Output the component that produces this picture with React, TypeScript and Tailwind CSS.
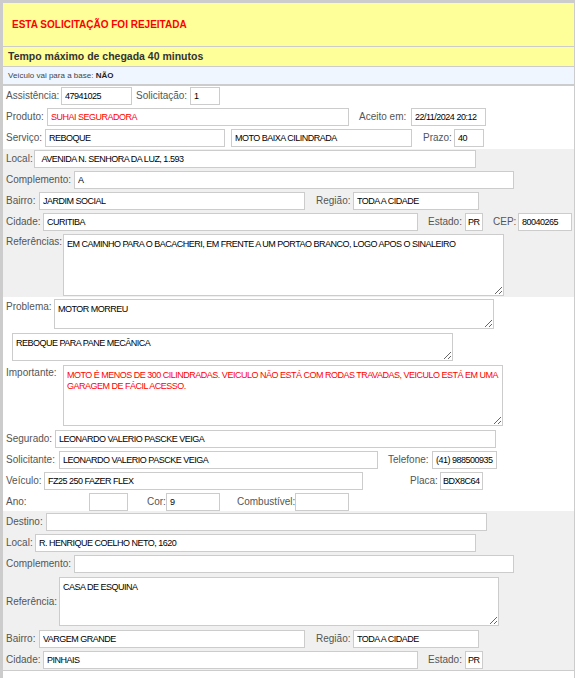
import { clsx } from "clsx";
import { twMerge } from "tailwind-merge";
import type { ReactNode } from "react";

const cn = (...args: Parameters<typeof clsx>) => twMerge(clsx(args));

const valueFont = "font-['Liberation_Sans',Arial,sans-serif] text-[9px] tracking-[-0.5px]";

const L = ({ className, children }: { className?: string; children: ReactNode }) => (
  <span className={cn("shrink-0 whitespace-nowrap text-[10px] leading-[18px] text-[#555]", className)}>{children}</span>
);

const I = ({ className, value = "", red }: { className?: string; value?: string; red?: boolean }) => (
  <input
    readOnly
    value={value}
    className={cn(
      valueFont,
      "h-[18px] shrink-0 border border-[#ccc] bg-white px-[3px] outline-none",
      red ? "text-[#ff0000]" : "text-black",
      className
    )}
  />
);

const T = ({ className, value = "", red }: { className?: string; value?: string; red?: boolean }) => (
  <textarea
    readOnly
    value={value}
    className={cn(
      valueFont,
      "shrink-0 resize border border-[#ccc] bg-white px-[3px] py-[4px] leading-[11px] outline-none",
      red ? "text-[#ff0000]" : "text-black",
      className
    )}
  />
);

const Row = ({ className, children }: { className?: string; children: ReactNode }) => (
  <div className={cn("flex h-[18px] items-center pl-[3px]", className)}>{children}</div>
);

export default function App() {
  return (
    <div className="min-h-[678px] w-[581px] bg-white font-['Liberation_Sans',Arial,sans-serif]">
      <div className="min-h-[678px] w-[575px] border-t-[3px] border-r border-l-[3px] border-[#ccc]">
        {/* status banner */}
        <div className="flex h-[44px] items-center border-b border-[#ccc] bg-[#ffff99] pl-[9px] text-[10px] font-bold text-[#ff0000]">
          ESTA SOLICITAÇÃO FOI REJEITADA
        </div>
        <div className="flex h-[20px] items-center border-b border-[#ccc] bg-[#ffff99] pl-[5px] text-[10.5px] font-bold text-[#333]">
          Tempo máximo de chegada 40 minutos
        </div>
        <div className="flex h-[19px] items-center border-b-2 border-[#ccc] bg-[#eff6ff] pl-[5px] text-[8px] text-[#444]">
          Veículo vai para a base:&nbsp;<b className="text-[#222]">NÃO</b>
        </div>

        {/* atendimento */}
        <div className="flex flex-col gap-[3px] bg-white pt-[1px] pb-[2px]">
          <Row>
            <L className="w-[55px]">Assistência:</L>
            <I className="w-[71px]" value="47941025" />
            <L className="ml-[4px] w-[54px]">Solicitação:</L>
            <I className="w-[30px]" value="1" />
          </Row>
          <Row>
            <L className="w-[41px]">Produto:</L>
            <I className="w-[302px]" value="SUHAI SEGURADORA" red />
            <L className="ml-[10px] w-[52px]">Aceito em:</L>
            <I className="w-[75px]" value="22/11/2024 20:12" />
          </Row>
          <Row>
            <L className="w-[39px]">Serviço:</L>
            <I className="w-[180px]" value="REBOQUE" />
            <I className="ml-[6px] w-[181px]" value="MOTO BAIXA CILINDRADA" />
            <L className="ml-[11px] w-[31px]">Prazo:</L>
            <I className="w-[30px]" value="40" />
          </Row>
        </div>

        {/* origem */}
        <div className="flex flex-col gap-[3px] bg-[#f0f0f0] pt-[1px] pb-[1px]">
          <Row>
            <L className="w-[28px]">Local:</L>
            <I className="w-[442px]" value="  AVENIDA N. SENHORA DA LUZ, 1.593" />
          </Row>
          <Row>
            <L className="w-[68px]">Complemento:</L>
            <I className="w-[440px]" value="A" />
          </Row>
          <Row>
            <L className="w-[33px]">Bairro:</L>
            <I className="w-[266px]" value="JARDIM SOCIAL" />
            <L className="ml-[11px] w-[37px]">Região:</L>
            <I className="w-[126px]" value="TODA A CIDADE" />
          </Row>
          <Row>
            <L className="w-[37px]">Cidade:</L>
            <I className="w-[375px]" value="CURITIBA" />
            <L className="ml-[10px] w-[37px]">Estado:</L>
            <I className="w-[18px] pr-0 pl-[2px]" value="PR" />
            <L className="ml-[10px] w-[25px]">CEP:</L>
            <I className="w-[54px]" value="80040265" />
          </Row>
          <div className="flex items-start pl-[3px]">
            <L className="w-[57px] leading-[16px]">Referências:</L>
            <T
              className="h-[62px] w-[441px]"
              value="EM CAMINHO PARA O BACACHERI, EM FRENTE A UM PORTAO BRANCO, LOGO APOS O SINALEIRO"
            />
          </div>
        </div>

        {/* problema */}
        <div className="flex flex-col bg-white pt-[2px]">
          <div className="flex items-start pl-[3px]">
            <L className="w-[48px] leading-[16px]">Problema:</L>
            <T className="h-[30px] w-[440px]" value="MOTOR MORREU" />
          </div>
          <div className="mt-[4px] flex pl-[9px]">
            <T className="h-[28px] w-[441px]" value="REBOQUE PARA PANE MECÂNICA" />
          </div>
          <div className="mt-[4px] flex items-start pl-[3px]">
            <L className="w-[57px] leading-[16px]">Importante:</L>
            <T
              className="h-[61px] w-[440px]"
              red
              value="MOTO É MENOS DE 300 CILINDRADAS. VEICULO NÃO ESTÁ COM RODAS TRAVADAS, VEICULO ESTÁ EM UMA GARAGEM DE FÁCIL ACESSO."
            />
          </div>
          <Row className="mt-[4px]">
            <L className="w-[49px]">Segurado:</L>
            <I className="w-[441px]" value="LEONARDO VALERIO PASCKE VEIGA" />
          </Row>
          <Row className="mt-[3px]">
            <L className="w-[53px]">Solicitante:</L>
            <I className="w-[319px]" value="LEONARDO VALERIO PASCKE VEIGA" />
            <L className="ml-[10px] w-[44px]">Telefone:</L>
            <I className="w-[65px]" value="(41) 988500935" />
          </Row>
          <Row className="mt-[3px]">
            <L className="w-[38px]">Veículo:</L>
            <I className="w-[319px]" value="FZ25 250 FAZER FLEX" />
            <L className="ml-[47px] w-[30px]">Placa:</L>
            <I className="w-[43px] px-[2px]" value="BDX8C64" />
          </Row>
          <Row className="mt-[3px]">
            <L className="w-[83px]">Ano:</L>
            <I className="w-[39px]" />
            <L className="ml-[19px] w-[19px]">Cor:</L>
            <I className="w-[54px]" value="9" />
            <L className="ml-[17px] w-[58px]">Combustível:</L>
            <I className="w-[54px]" />
          </Row>
        </div>

        {/* destino */}
        <div className="flex flex-col border-b border-[#ccc] bg-[#f0f0f0] pt-[2px] pb-[1px]">
          <Row>
            <L className="w-[40px]">Destino:</L>
            <I className="w-[441px]" />
          </Row>
          <Row className="mt-[3px]">
            <L className="w-[29px]">Local:</L>
            <I className="w-[441px]" value="R. HENRIQUE COELHO NETO, 1620" />
          </Row>
          <Row className="mt-[3px]">
            <L className="w-[68px]">Complemento:</L>
            <I className="w-[440px]" />
          </Row>
          <div className="mt-[4px] flex items-center pl-[3px]">
            <L className="w-[53px]">Referência:</L>
            <T className="h-[49px] w-[440px]" value="CASA DE ESQUINA" />
          </div>
          <Row className="mt-[4px]">
            <L className="w-[33px]">Bairro:</L>
            <I className="w-[266px]" value="VARGEM GRANDE" />
            <L className="ml-[11px] w-[37px]">Região:</L>
            <I className="w-[126px]" value="TODA A CIDADE" />
          </Row>
          <Row className="mt-[3px]">
            <L className="w-[37px]">Cidade:</L>
            <I className="w-[375px]" value="PINHAIS" />
            <L className="ml-[10px] w-[37px]">Estado:</L>
            <I className="w-[18px] pr-0 pl-[2px]" value="PR" />
          </Row>
        </div>
      </div>
    </div>
  );
}
